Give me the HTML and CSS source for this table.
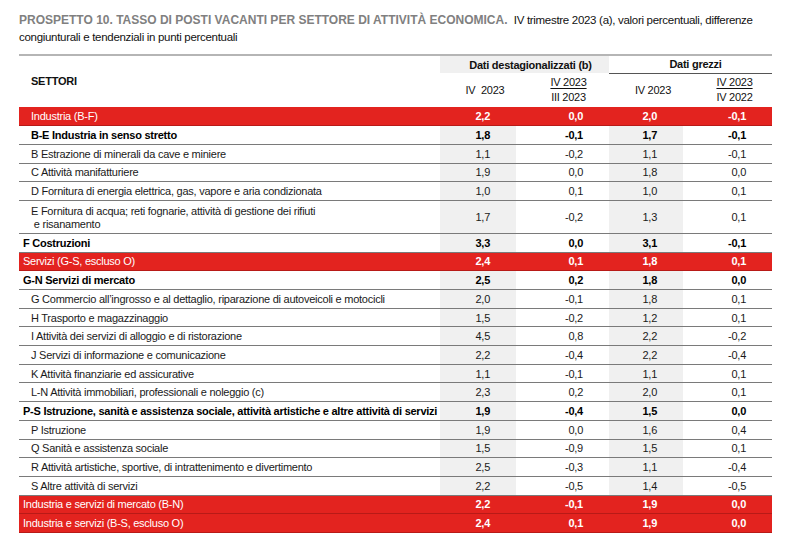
FILE: index.html
```html
<!DOCTYPE html>
<html lang="it">
<head>
<meta charset="utf-8">
<title>Prospetto 10</title>
<link rel="stylesheet" href="styles.css">
</head>
<body>
<div class="page">
  <p class="title"><span class="title-strong">PROSPETTO 10. TASSO DI POSTI VACANTI PER SETTORE DI ATTIVITÀ ECONOMICA.</span> <span class="title-rest">&nbsp;IV trimestre 2023 (a), valori percentuali, differenze<br>congiunturali e tendenziali in punti percentuali</span></p>
  <table class="tab">
    <colgroup>
      <col class="c-lab"><col class="c-1"><col class="c-2"><col class="c-3"><col class="c-4">
    </colgroup>
    <thead>
      <tr class="h1">
        <th rowspan="2" class="settori">SETTORI</th>
        <th colspan="2" class="grp grp-dest">Dati destagionalizzati (b)</th>
        <th colspan="2" class="grp grp-grez">Dati grezzi</th>
      </tr>
      <tr class="h2">
        <th class="hc hc1">IV&nbsp; 2023</th>
        <th class="hc hc2"><span class="frac"><span class="num">IV 2023</span><span class="den">III 2023</span></span></th>
        <th class="hc hc3">IV 2023</th>
        <th class="hc hc4"><span class="frac"><span class="num">IV 2023</span><span class="den">IV 2022</span></span></th>
      </tr>
    </thead>
    <tbody>
      <tr class="red"><td class="lab in">Industria (B-F)</td><td>2,2</td><td>0,0</td><td>2,0</td><td>-0,1</td></tr>
      <tr class="bold"><td class="lab in">B-E Industria in senso stretto</td><td>1,8</td><td>-0,1</td><td>1,7</td><td>-0,1</td></tr>
      <tr><td class="lab in">B Estrazione di minerali da cave e miniere</td><td>1,1</td><td>-0,2</td><td>1,1</td><td>-0,1</td></tr>
      <tr><td class="lab in">C Attività manifatturiere</td><td>1,9</td><td>0,0</td><td>1,8</td><td>0,0</td></tr>
      <tr><td class="lab in">D Fornitura di energia elettrica, gas, vapore e aria condizionata</td><td>1,0</td><td>0,1</td><td>1,0</td><td>0,1</td></tr>
      <tr class="tall"><td class="lab in">E Fornitura di acqua; reti fognarie, attività di gestione dei rifiuti<br>&nbsp;e risanamento</td><td>1,7</td><td>-0,2</td><td>1,3</td><td>0,1</td></tr>
      <tr class="bold"><td class="lab">F Costruzioni</td><td>3,3</td><td>0,0</td><td>3,1</td><td>-0,1</td></tr>
      <tr class="red"><td class="lab">Servizi (G-S, escluso O)</td><td>2,4</td><td>0,1</td><td>1,8</td><td>0,1</td></tr>
      <tr class="bold"><td class="lab">G-N Servizi di mercato</td><td>2,5</td><td>0,2</td><td>1,8</td><td>0,0</td></tr>
      <tr><td class="lab in">G Commercio all’ingrosso e al dettaglio, riparazione di autoveicoli e motocicli</td><td>2,0</td><td>-0,1</td><td>1,8</td><td>0,1</td></tr>
      <tr><td class="lab in">H Trasporto e magazzinaggio</td><td>1,5</td><td>-0,2</td><td>1,2</td><td>0,1</td></tr>
      <tr><td class="lab in">I Attività dei servizi di alloggio e di ristorazione</td><td>4,5</td><td>0,8</td><td>2,2</td><td>-0,2</td></tr>
      <tr><td class="lab in">J Servizi di informazione e comunicazione</td><td>2,2</td><td>-0,4</td><td>2,2</td><td>-0,4</td></tr>
      <tr><td class="lab in">K Attività finanziarie ed assicurative</td><td>1,1</td><td>-0,1</td><td>1,1</td><td>0,1</td></tr>
      <tr><td class="lab in">L-N Attività immobiliari, professionali e noleggio (c)</td><td>2,3</td><td>0,2</td><td>2,0</td><td>0,1</td></tr>
      <tr class="bold"><td class="lab">P-S Istruzione, sanità e assistenza sociale, attività artistiche e altre attività di servizi</td><td>1,9</td><td>-0,4</td><td>1,5</td><td>0,0</td></tr>
      <tr><td class="lab in">P Istruzione</td><td>1,9</td><td>0,0</td><td>1,6</td><td>0,4</td></tr>
      <tr><td class="lab in">Q Sanità e assistenza sociale</td><td>1,5</td><td>-0,9</td><td>1,5</td><td>0,1</td></tr>
      <tr><td class="lab in">R Attività artistiche, sportive, di intrattenimento e divertimento</td><td>2,5</td><td>-0,3</td><td>1,1</td><td>-0,4</td></tr>
      <tr><td class="lab in">S Altre attività di servizi</td><td>2,2</td><td>-0,5</td><td>1,4</td><td>-0,5</td></tr>
      <tr class="red"><td class="lab">Industria e servizi di mercato (B-N)</td><td>2,2</td><td>-0,1</td><td>1,9</td><td>0,0</td></tr>
      <tr class="red"><td class="lab">Industria e servizi (B-S, escluso O)</td><td>2,4</td><td>0,1</td><td>1,9</td><td>0,0</td></tr>
    </tbody>
  </table>
</div>
</body>
</html>
```
FILE: styles.css
```css
html, body {
  margin: 0;
  padding: 0;
  background: #ffffff;
}
body {
  font-family: "Liberation Sans", Arial, sans-serif;
  color: #111111;
}
.page {
  padding: 12px 0 0 19px;
  width: 753px;
}
.title {
  margin: 0 0 8px 0;
  font-size: 12px;
  line-height: 17px;
  height: 34px;
  color: #111;
  white-space: nowrap;
}
.title-strong {
  font-weight: bold;
  color: #808080;
  font-size: 12px;
}
.title-rest {
  font-size: 11.5px;
  letter-spacing: -0.3px;
}
.tab {
  border-collapse: collapse;
  table-layout: fixed;
  width: 753px;
  font-size: 11px;
  letter-spacing: -0.25px;
  border-top: 2px solid #b5b5b5;
}
.c-lab { width: 421px; }
.c-1 { width: 76px; }
.c-2 { width: 93px; }
.c-3 { width: 74px; }
.c-4 { width: 89px; }

th, td {
  padding: 0;
  white-space: nowrap;
  line-height: 14px;
}
.h1 { height: 18px; }
.h2 { height: 34px; }
.settori {
  text-align: left;
  padding-left: 12px;
  font-weight: bold;
  vertical-align: middle;
  padding-bottom: 2px;
}
.grp {
  font-weight: bold;
  text-align: center;
  vertical-align: middle;
}
.grp-dest {
  background: #f0f0f0;
  padding-left: 12px;
}
.grp-grez {
  border-bottom: 1px solid #555;
  padding-left: 10px;
}
.hc {
  font-weight: normal;
  text-align: center;
  vertical-align: middle;
}
.hc1 { padding-left: 14px; }
.hc2 { padding-left: 12px; }
.hc3 { padding-left: 14px; }
.hc4 { padding-left: 14px; }
.frac {
  display: inline-flex;
  flex-direction: column;
  align-items: center;
  line-height: 15px;
}
.frac .num {
  text-decoration: underline;
  text-underline-offset: 2px;
}

tbody tr { height: 18.7px; }
tbody tr.tall { height: 33px; }
tbody td {
  text-align: right;
  padding-right: 26px;
  border-bottom: 1px solid #7a7a7a;
  vertical-align: middle;
  color: #1a1a1a;
}
tbody td:nth-child(2),
tbody td:nth-child(4) {
  background: #f0f0f0;
}
tbody td.lab {
  text-align: left;
  padding-left: 4px;
  padding-right: 0;
  background: none;
}
tbody td.lab.in { padding-left: 12px; }
tbody tr.tall td.lab { white-space: normal; line-height: 13px; padding-top: 2px; }
tr.bold td { font-weight: bold; color: #000; }
tr.red td {
  background: #e3231f;
  color: #ffffff;
  border-bottom: 1px solid #b81a17;
}
tr.red td:not(.lab) { font-weight: bold; }
```
